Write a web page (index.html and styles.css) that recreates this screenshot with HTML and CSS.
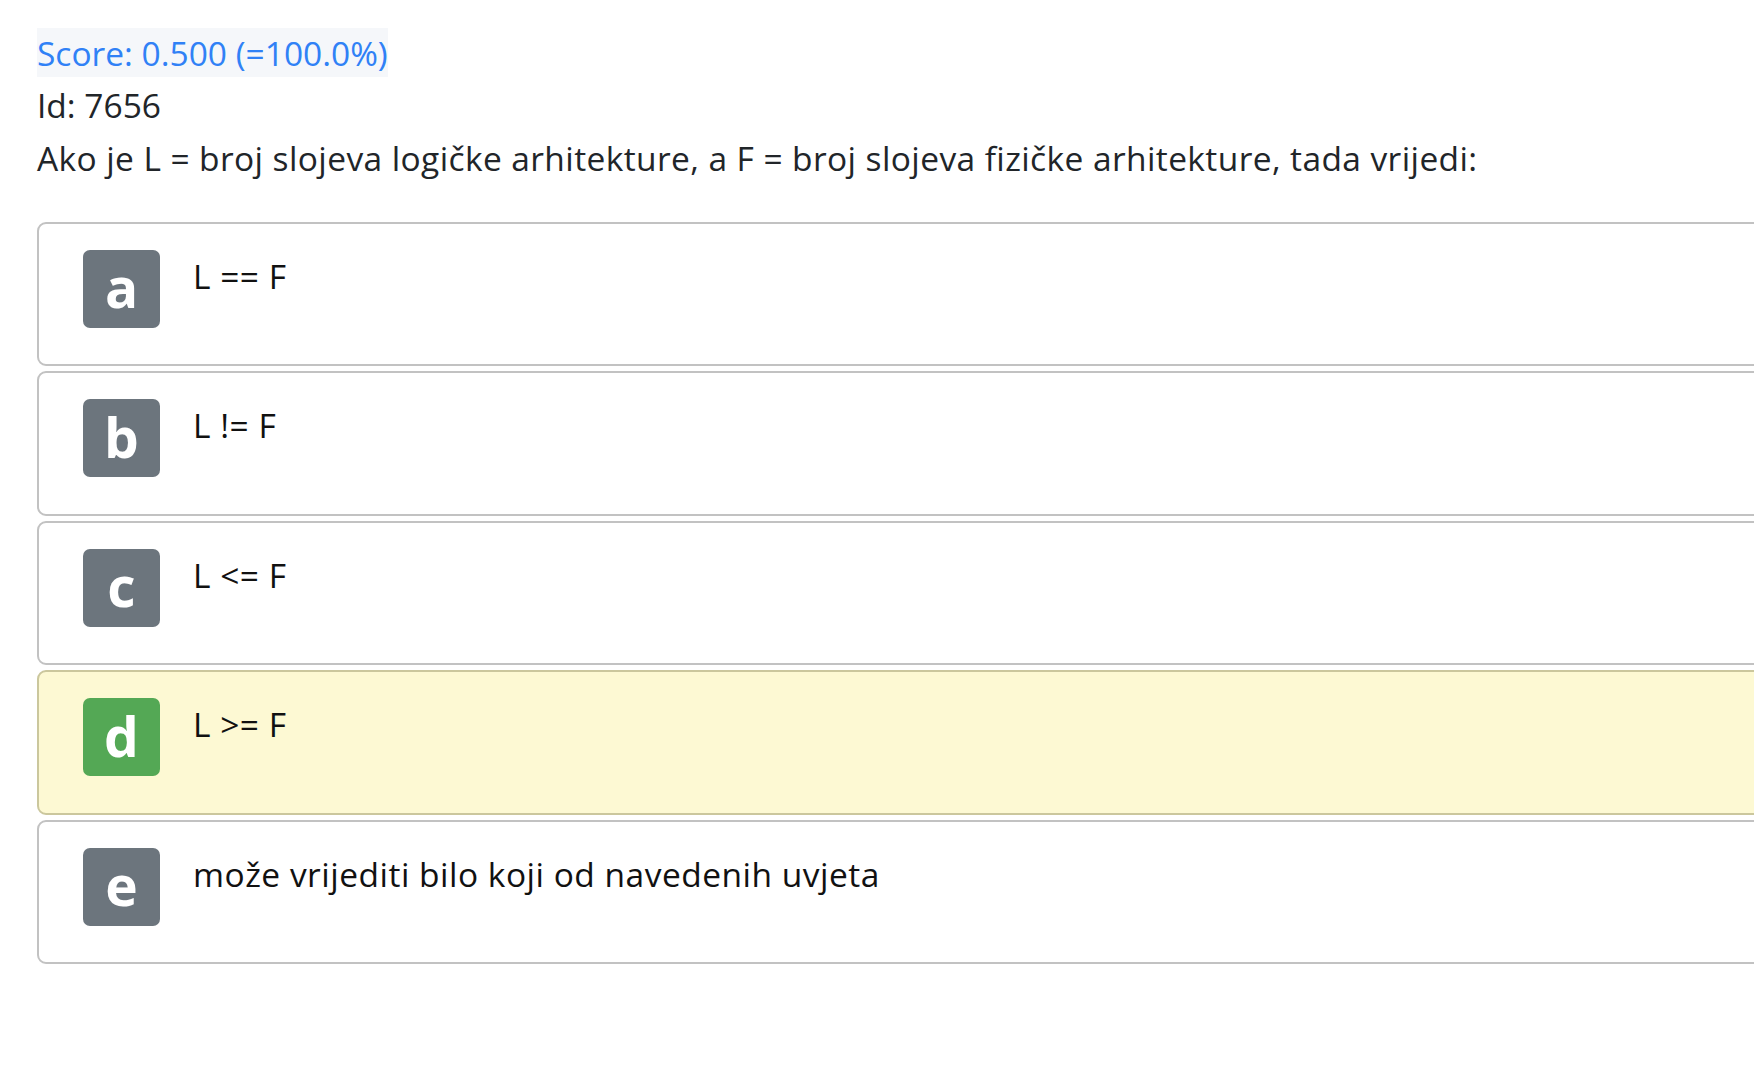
FILE: index.html
```html
<!DOCTYPE html>
<html lang="hr">
<head>
<meta charset="utf-8">
<title>Pitanje 7656</title>
<link rel="stylesheet" href="styles.css">
</head>
<body>
<main class="page">
  <div class="line"><span class="score">Score: 0.500 (=100.0%)</span></div>
  <div class="line">Id: 7656</div>
  <div class="line question">Ako je L = broj slojeva logičke arhitekture, a F = broj slojeva fizičke arhitekture, tada vrijedi:</div>
  <ul class="answers">
    <li class="answer"><span class="badge">a</span><span class="answer-text">L == F</span></li>
    <li class="answer"><span class="badge">b</span><span class="answer-text">L != F</span></li>
    <li class="answer"><span class="badge">c</span><span class="answer-text">L &lt;= F</span></li>
    <li class="answer answer-correct"><span class="badge badge-correct">d</span><span class="answer-text">L &gt;= F</span></li>
    <li class="answer"><span class="badge">e</span><span class="answer-text">može vrijediti bilo koji od navedenih uvjeta</span></li>
  </ul>
</main>
</body>
</html>
```
FILE: styles.css
```css
html, body {
  margin: 0;
  padding: 0;
  background: #ffffff;
  overflow: hidden;
}

.page {
  padding: 26.5px 0 0 37px;
  font-family: "Open Sans", Lato, sans-serif;
  font-size: 33.5px;
  line-height: 52.5px;
  color: #212529;
  font-variant-ligatures: none;
}

.line {
  white-space: nowrap;
}

.question {
  letter-spacing: 0.4px;
}

.score {
  color: #3081f6;
  background: #f5f7fa;
  padding: 2px 0 1px 0;
}

.answers {
  list-style: none;
  margin: 37.5px 0 0 0;
  padding: 0;
  width: 1800px;
}

.answer {
  display: flex;
  align-items: flex-start;
  gap: 33px;
  padding: 26px 44px 36.5px 44px;
  margin-bottom: 5.1px;
  border: 2px solid #c2c2c2;
  border-radius: 9px;
  background: #ffffff;
}

.answer-correct {
  background: #fdf9d3;
  border-color: #cbc79d;
}

.badge {
  flex: 0 0 auto;
  width: 77px;
  height: 78px;
  display: flex;
  align-items: center;
  justify-content: center;
  border-radius: 7px;
  background: #6c757d;
  color: #ffffff;
  font-weight: 700;
  font-size: 55px;
  line-height: 1;
  padding-bottom: 4px;
  box-sizing: border-box;
}

.badge-correct {
  background: #54a855;
}

.answer-text {
  color: #111111;
  white-space: nowrap;
  letter-spacing: 0.5px;
}
```
